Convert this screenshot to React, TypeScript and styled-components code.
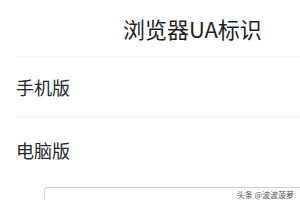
import React from 'react';
import styled, { createGlobalStyle } from 'styled-components';

const GlobalStyle = createGlobalStyle`
  html, body {
    margin: 0;
    padding: 0;
    background: #ffffff;
  }
  body {
    font-family: "Noto Sans CJK SC", "Noto Sans", sans-serif;
    color: #222222;
    overflow: hidden;
  }
`;

const Screen = styled.div`
  width: 300px;
  height: 200px;
  position: relative;
  overflow: hidden;
  background: #ffffff;
`;

const Header = styled.div`
  height: 56px;
  display: flex;
  align-items: center;
  margin-left: 16px;
  padding-left: 107px;
  font-size: 22px;
  line-height: 1;
  color: #1e1e1e;
  border-bottom: 1px solid #f6f6f6;
`;

const Option = styled.div<{ $last?: boolean }>`
  height: 59px;
  display: flex;
  align-items: center;
  margin-left: 16px;
  font-size: 18px;
  color: #262626;
  border-bottom: 1px solid ${p => (p.$last ? 'transparent' : '#f3f3f3')};
  padding-top: ${p => (p.$last ? 3 : 0)}px;
`;

const Card = styled.div`
  margin: 7px 0 0 44px;
  height: 40px;
  border: 1px solid #cfcfcf;
  border-right: none;
  border-radius: 4px 0 0 0;
  position: relative;
`;

const Watermark = styled.span`
  position: absolute;
  right: 6px;
  top: 1px;
  font-size: 8px;
  color: #555555;
`;

export default function App() {
  return (
    <>
      <GlobalStyle />
      <Screen>
        <Header>浏览器UA标识</Header>
        <Option>手机版</Option>
        <Option $last>电脑版</Option>
        <Card>
          <Watermark>头条 @波波菠萝</Watermark>
        </Card>
      </Screen>
    </>
  );
}
